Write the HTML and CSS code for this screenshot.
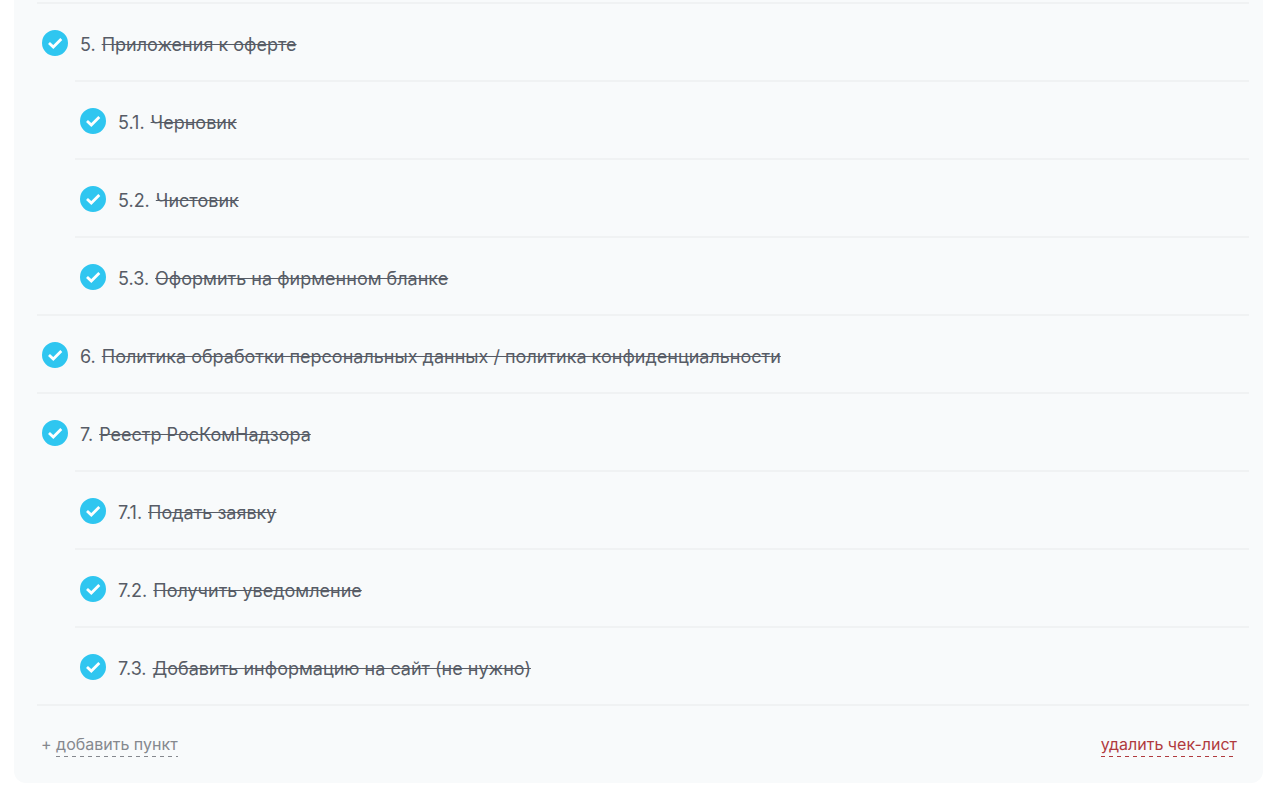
FILE: index.html
```html
<!DOCTYPE html>
<html lang="ru">
<head>
<meta charset="UTF-8">
<meta name="viewport" content="width=device-width, initial-scale=1.0">
<title>Чек-лист</title>
<link rel="stylesheet" href="styles.css">
</head>
<body>
<svg width="0" height="0" class="sprite">
    <symbol id="tick" viewBox="0 0 26 26">
        <path d="M7 13L11.3 17L19.3 9" fill="none" stroke="#fff" stroke-width="2.8"/>
    </symbol>
</svg>
<div class="checklist">
    <ul class="list">
        <li class="item">
            <span class="check"><input type="checkbox" id="item5" checked><svg><use href="#tick"/></svg></span>
            <label for="item5"><span>5.</span><s>Приложения к оферте</s></label>
        </li>
        <li class="item sub">
            <span class="check"><input type="checkbox" id="item5-1" checked><svg><use href="#tick"/></svg></span>
            <label for="item5-1"><span>5.1.</span><s>Черновик</s></label>
        </li>
        <li class="item sub">
            <span class="check"><input type="checkbox" id="item5-2" checked><svg><use href="#tick"/></svg></span>
            <label for="item5-2"><span>5.2.</span><s>Чистовик</s></label>
        </li>
        <li class="item sub">
            <span class="check"><input type="checkbox" id="item5-3" checked><svg><use href="#tick"/></svg></span>
            <label for="item5-3"><span>5.3.</span><s>Оформить на фирменном бланке</s></label>
        </li>
        <li class="item">
            <span class="check"><input type="checkbox" id="item6" checked><svg><use href="#tick"/></svg></span>
            <label for="item6"><span>6.</span><s>Политика обработки персональных данных / политика конфиденциальности</s></label>
        </li>
        <li class="item">
            <span class="check"><input type="checkbox" id="item7" checked><svg><use href="#tick"/></svg></span>
            <label for="item7"><span>7.</span><s>Реестр РосКомНадзора</s></label>
        </li>
        <li class="item sub">
            <span class="check"><input type="checkbox" id="item7-1" checked><svg><use href="#tick"/></svg></span>
            <label for="item7-1"><span>7.1.</span><s>Подать заявку</s></label>
        </li>
        <li class="item sub">
            <span class="check"><input type="checkbox" id="item7-2" checked><svg><use href="#tick"/></svg></span>
            <label for="item7-2"><span>7.2.</span><s>Получить уведомление</s></label>
        </li>
        <li class="item sub">
            <span class="check"><input type="checkbox" id="item7-3" checked><svg><use href="#tick"/></svg></span>
            <label for="item7-3"><span>7.3.</span><s>Добавить информацию на сайт (не нужно)</s></label>
        </li>
    </ul>
    <div class="actions">
        <button type="button" class="add">+ <span>добавить пункт</span></button>
        <button type="button" class="delete"><span>удалить чек-лист</span></button>
    </div>
</div>
</body>
</html>
```
FILE: styles.css
```css
body {
    margin: 0;
    background-color: #fff;
    font-family: Inter, "Noto Sans", sans-serif;
    font-size: 18px;
    color: #575c66;
}
.sprite {
    display: none;
}
.checklist {
    margin: 0 17px 0 14px;
    padding: 2px 14px 26px 23px;
    background-color: #f8fafb;
    border-radius: 0 0 12px 12px;
}
.list {
    margin: 0;
    padding: 0;
    list-style: none;
    border-bottom: 2px solid #f0f2f3;
}
.item {
    display: flex;
    gap: 12px;
    padding: 26px 5px 24px;
    border-top: 2px solid #f0f2f3;
}
.sub {
    margin-left: 38px;
}
.check {
    display: grid;
    flex: none;
    width: 26px;
    height: 26px;
}
.check input, .check svg {
    grid-area: 1 / 1;
    width: 26px;
    height: 26px;
    margin: 0;
}
.check input {
    appearance: none;
    border-radius: 50%;
    border: 2px solid #c6cdd3;
    cursor: pointer;
}
.check input:checked {
    background-color: #2fc6f0;
    border-color: #2fc6f0;
}
.check svg {
    pointer-events: none;
}
.check input:not(:checked) + svg {
    visibility: hidden;
}
.item label {
    display: flex;
    gap: 6px;
    padding-top: 3px;
    line-height: 23px;
    cursor: pointer;
}
.actions {
    display: flex;
    justify-content: space-between;
    padding: 26px 12px 0 4px;
}
.actions button {
    padding: 0;
    border: none;
    background: none;
    font-family: inherit;
    font-size: 16px;
    line-height: 24px;
    cursor: pointer;
}
/* dashed underline with wide gaps */
.actions span {
    display: inline-block;
    padding-bottom: 1px;
    background-position: left bottom;
    background-size: 8px 1px;
    background-repeat: repeat-x;
}
.actions .add {
    color: #85888e;
}
.actions .add span {
    background-image: linear-gradient(90deg, #85888e 4px, transparent 4px);
}
.actions .delete {
    color: #b03a3e;
}
.actions .delete span {
    background-image: linear-gradient(90deg, #b03a3e 4px, transparent 4px);
}
```
